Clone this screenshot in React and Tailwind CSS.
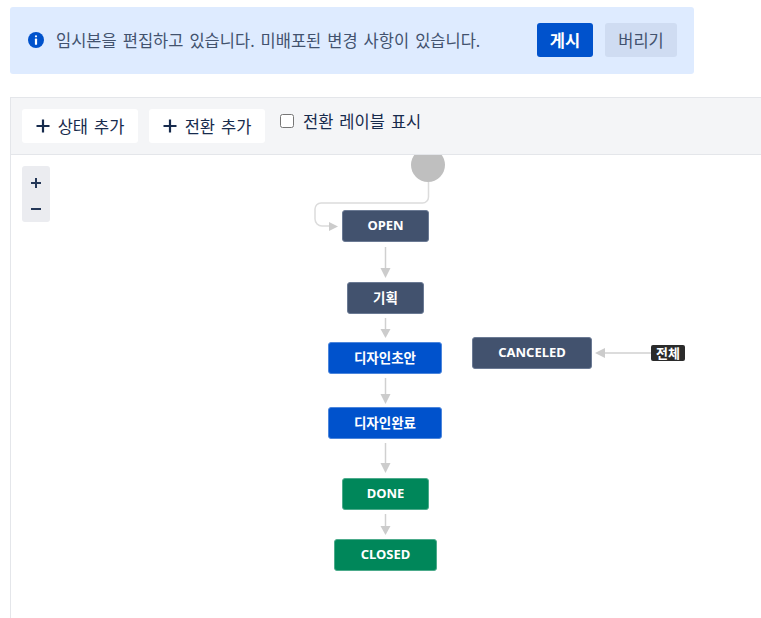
const FONT = "font-['Noto_Sans','Noto_Sans_CJK_KR',sans-serif]";

function Node({ x, y, w, color, border, korean, children }) {
  return (
    <div
      className={`absolute flex h-8 items-center justify-center rounded-[3px] border font-bold text-white ${korean ? "text-[13.5px]" : "text-[13px]"} ${color} ${border}`}
      style={{ left: x, top: y, width: w }}
    >
      {children}
    </div>
  );
}

function ToolButton({ children }) {
  return (
    <button className="flex h-[34px] w-[116px] items-center justify-center gap-[8px] rounded-[3px] bg-white text-[16.5px] [word-spacing:1.7px] text-[#172b4d]">
      <svg width="14" height="14" viewBox="0 0 14 14" fill="none" stroke="#172b4d" strokeWidth="2.2">
        <path d="M7 0.5v13M0.5 7h13" />
      </svg>
      <span className="pt-0.5">{children}</span>
    </button>
  );
}

export default function App() {
  return (
    <div className={`${FONT} h-[618px] w-[761px] overflow-hidden bg-white pl-[10px] pt-[7px]`}>
      <div className="flex h-[67px] w-[684px] items-center rounded-[3px] bg-[#deebff] pb-px pl-[18px] pr-[17px]">
        <svg width="16" height="16" viewBox="0 0 16 16" className="shrink-0">
          <circle cx="8" cy="8" r="8" fill="#0052cc" />
          <rect x="6.9" y="3.2" width="2.2" height="2.2" rx="1.1" fill="#fff" />
          <rect x="6.9" y="6.6" width="2.2" height="6.2" rx="0.6" fill="#fff" />
        </svg>
        <span className="ml-[12px] pt-0.5 text-[16.5px] [word-spacing:1.7px] text-[#42526e]">임시본을 편집하고 있습니다. 미배포된 변경 사항이 있습니다.</span>
        <button className="ml-auto h-[34px] w-14 rounded-[3px] bg-[#0052cc] pt-0.5 text-[16.5px] font-bold text-white">게시</button>
        <button className="ml-3 h-[34px] w-[72px] rounded-[3px] bg-[#cfdcf2] pt-0.5 text-[16.5px] text-[#42526e]">버리기</button>
      </div>

      <div className="mt-[23px] h-[521px] border-l border-[#e4e6ea]">
        <div className="flex h-[58px] items-start border-y border-[#e4e6ea] bg-[#f4f5f7] pl-[11px] pt-[11px]">
          <ToolButton>상태 추가</ToolButton>
          <div className="ml-[11px]"><ToolButton>전환 추가</ToolButton></div>
          <label className="ml-[15px] flex h-6 items-center gap-[9px] text-[16.5px] [word-spacing:1.7px] text-[#172b4d]">
            <input type="checkbox" className="h-[14px] w-[14px] appearance-auto" />
            <span className="pt-0.5">전환 레이블 표시</span>
          </label>
        </div>

        <div className="relative h-[463px] overflow-hidden">
          <div className="absolute left-[11px] top-[11px] flex h-14 w-7 flex-col items-center gap-4 rounded-[3px] bg-[#ebecf0] pt-3">
            <svg width="10" height="10" viewBox="0 0 10 10" stroke="#253858" strokeWidth="2"><path d="M5 0v10M0 5h10" /></svg>
            <svg width="10" height="10" viewBox="0 0 10 10" stroke="#253858" strokeWidth="2"><path d="M0 5h10" /></svg>
          </div>

          <svg className="absolute left-0 top-0" width="750" height="463" fill="none">
            <circle cx="417" cy="10" r="17" fill="#bfbfbf" />
            <path d="M417.5 27V42a6 6 0 0 1-6 6H310a6 6 0 0 0-6 6v10a7 7 0 0 0 7 7h8" stroke="#dcdcdc" strokeWidth="1.5" />
            <path d="M318 67l9 4.5-9 4.5z" fill="#cccccc" />
            <g stroke="#d0d0d0" strokeWidth="1.5">
              <path d="M374.5 92v23" />
              <path d="M374.5 163v13" />
              <path d="M374.5 223v18" />
              <path d="M374.5 288v22" />
              <path d="M374.5 359v14" />
              <path d="M588 198h52" />
            </g>
            <g fill="#cccccc">
              <path d="M369.5 113h10l-5 10z" />
              <path d="M369.5 174h10l-5 9z" />
              <path d="M369.5 239h10l-5 10z" />
              <path d="M369.5 308h10l-5 10z" />
              <path d="M369.5 371h10l-5 9z" />
              <path d="M584 198l10-5v10z" />
            </g>
          </svg>

          <Node x={331} y={55} w={87} color="bg-[#42526e]" border="border-[#6b7a94]">OPEN</Node>
          <Node x={336} y={127} w={77} color="bg-[#42526e]" border="border-[#6b7a94]" korean>기획</Node>
          <Node x={317} y={187} w={114} color="bg-[#0052cc]" border="border-[#4c86dc]" korean>디자인초안</Node>
          <Node x={317} y={252} w={114} color="bg-[#0052cc]" border="border-[#4c86dc]" korean>디자인완료</Node>
          <Node x={331} y={323} w={87} color="bg-[#00875a]" border="border-[#4cab8b]">DONE</Node>
          <Node x={323} y={384} w={103} color="bg-[#00875a]" border="border-[#4cab8b]">CLOSED</Node>
          <Node x={461} y={182} w={120} color="bg-[#42526e]" border="border-[#6b7a94]">CANCELED</Node>
          <div className="absolute left-[640px] top-[190px] flex h-4 w-[34px] items-center justify-center rounded-[2px] bg-[#2b2b2b] text-[13px] font-bold leading-none text-white">전체</div>
        </div>
      </div>
    </div>
  );
}
